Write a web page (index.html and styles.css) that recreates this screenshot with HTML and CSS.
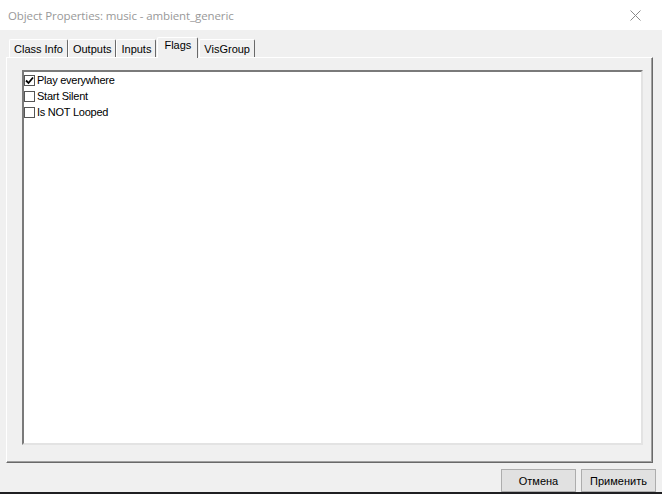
FILE: index.html
```html
<!DOCTYPE html>
<html>
<head>
<meta charset="utf-8">
<link rel="stylesheet" href="styles.css">
</head>
<body>
<div class="window">
  <div class="titlebar">
    <span class="title">Object Properties: music - ambient_generic</span>
    <svg class="close" width="11" height="11" viewBox="0 0 11 11"><path d="M0.5 0.5 L10.5 10.5 M10.5 0.5 L0.5 10.5" stroke="#8a8a8a" stroke-width="1" fill="none"/></svg>
  </div>
  <div class="main">
    <div class="tabs">
      <div class="tab">Class Info</div>
      <div class="tab">Outputs</div>
      <div class="tab">Inputs</div>
      <div class="tab active">Flags</div>
      <div class="tab">VisGroup</div>
    </div>
    <div class="panel">
      <div class="listbox">
        <label class="row"><span class="box checked"><svg width="9" height="9" viewBox="0 0 9 9"><path d="M1 4.5 L3.5 7 L8 1.5" stroke="#000" stroke-width="1.8" fill="none"/></svg></span>Play everywhere</label>
        <label class="row"><span class="box"></span>Start Silent</label>
        <label class="row"><span class="box"></span>Is NOT Looped</label>
      </div>
    </div>
  </div>
  <div class="footer">
    <button class="btn">Отмена</button>
    <button class="btn">Применить</button>
  </div>
  <div class="strip"></div>
</div>
</body>
</html>
```

FILE: styles.css
```css
html, body {
  margin: 0;
  padding: 0;
}
body {
  width: 662px;
  height: 494px;
  overflow: hidden;
  font-family: "Liberation Sans", Arial, sans-serif;
  font-size: 11px;
  color: #000;
}
.window {
  width: 662px;
  height: 494px;
  background: #f0f0f0;
  display: flex;
  flex-direction: column;
}
.titlebar {
  height: 30px;
  flex: none;
  background: #fff;
  display: flex;
  align-items: center;
  justify-content: space-between;
  padding: 0 21px 0 8px;
  box-sizing: border-box;
}
.title {
  font-family: "Open Sans", "Noto Sans", sans-serif;
  font-size: 11.5px;
  color: #999;
  letter-spacing: -0.1px;
}
.close {
  display: block;
}
.main {
  flex: 1;
  display: flex;
  flex-direction: column;
  padding: 7px 9px 0 6px;
}
.tabs {
  display: flex;
  align-items: flex-end;
  height: 20px;
  padding-left: 3px;
  flex: none;
}
.tab {
  height: 18px;
  box-sizing: border-box;
  padding: 2px 4px 0 4px;
  border-left: 1px solid #fff;
  border-top: 1px solid #fff;
  border-right: 1px solid #696969;
  border-radius: 2px 2px 0 0;
  line-height: 14px;
  white-space: nowrap;
}
.tab.active {
  height: 21px;
  margin-bottom: -1px;
  margin-left: 1px;
  margin-right: 1px;
  padding: 0 6px 0 6px;
  background: #f0f0f0;
  position: relative;
  z-index: 1;
}
.panel {
  flex: 1;
  border-top: 1px solid #fff;
  border-left: 1px solid #fff;
  border-right: 1px solid #696969;
  border-bottom: 1px solid #696969;
  box-shadow: inset -1px -1px 0 #a0a0a0;
  padding: 12px 9px 17px 15px;
  display: flex;
}
.listbox {
  flex: 1;
  background: #fff;
  border-top: 2px solid #7a7a7a;
  border-left: 2px solid #7a7a7a;
  border-right: 2px solid #e3e3e3;
  border-bottom: 2px solid #e3e3e3;
  padding-top: 0;
  display: flex;
  flex-direction: column;
}
.row {
  height: 16px;
  display: flex;
  align-items: center;
  white-space: nowrap;
  letter-spacing: -0.25px;
}
.box {
  width: 11px;
  height: 11px;
  box-sizing: border-box;
  border: 1px solid #555;
  background: #fff;
  margin: 0 2px 0 0;
  display: flex;
  align-items: center;
  justify-content: center;
}
.box svg {
  display: block;
}
.footer {
  flex: none;
  height: 29px;
  display: flex;
  justify-content: flex-end;
  align-items: flex-start;
  gap: 5px;
  padding: 6px 6px 0 0;
  box-sizing: border-box;
}
.btn {
  width: 75px;
  height: 23px;
  background: #e1e1e1;
  border: 1px solid #adadad;
  font-family: "Liberation Sans", Arial, sans-serif;
  font-size: 11px;
  color: #000;
  padding: 0;
  margin: 0;
}
.strip {
  flex: none;
  height: 2px;
  background: #1f1f22;
}
```
